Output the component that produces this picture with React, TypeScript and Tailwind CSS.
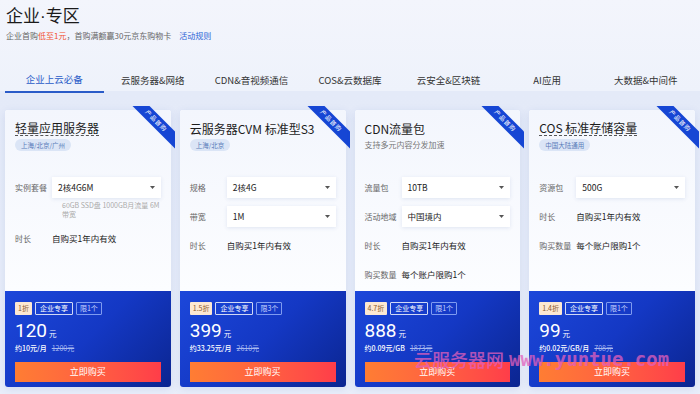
type Row = { label: string; select?: string; text?: string; note?: string };

interface Product {
  title: string;
  dashed?: boolean;
  tag?: string;
  desc?: string;
  rows: Row[];
  discount: string;
  limit: string;
  price: string;
  unit: string;
  origin: string;
}

const tabs = ['企业上云必备', '云服务器&网络', 'CDN&音视频通信', 'COS&云数据库', '云安全&区块链', 'AI应用', '大数据&中间件'];

const products: Product[] = [
  {
    title: '轻量应用服务器',
    dashed: true,
    tag: '上海/北京/广州',
    rows: [
      { label: '实例套餐', select: '2核4G6M', note: '60GB SSD盘 1000GB月流量 6M带宽' },
      { label: '时长', text: '自购买1年内有效' },
    ],
    discount: '1折',
    limit: '限1个',
    price: '120',
    unit: '约10元/月',
    origin: '1200元',
  },
  {
    title: '云服务器CVM 标准型S3',
    tag: '上海/北京',
    rows: [
      { label: '规格', select: '2核4G' },
      { label: '带宽', select: '1M' },
      { label: '时长', text: '自购买1年内有效' },
    ],
    discount: '1.5折',
    limit: '限3个',
    price: '399',
    unit: '约33.25元/月',
    origin: '2610元',
  },
  {
    title: 'CDN流量包',
    desc: '支持多元内容分发加速',
    rows: [
      { label: '流量包', select: '10TB' },
      { label: '活动地域', select: '中国境内' },
      { label: '时长', text: '自购买1年内有效' },
      { label: '购买数量', text: '每个账户限购1个' },
    ],
    discount: '4.7折',
    limit: '限1个',
    price: '888',
    unit: '约0.09元/GB',
    origin: '1873元',
  },
  {
    title: 'COS 标准存储容量',
    dashed: true,
    tag: '中国大陆通用',
    rows: [
      { label: '资源包', select: '500G' },
      { label: '时长', text: '自购买1年内有效' },
      { label: '购买数量', text: '每个账户限购1个' },
    ],
    discount: '1.4折',
    limit: '限1个',
    price: '99',
    unit: '约0.02元/GB/月',
    origin: '708元',
  },
];

function Ribbon() {
  return (
    <div className="absolute -top-[4px] -right-[4px] w-[46px] h-[46px] overflow-hidden">
      <div className="absolute top-[9px] -right-[16px] w-[70px] h-[12px] rotate-45 bg-[#1646d4] flex items-center justify-center text-[6px] leading-none text-white tracking-[1px]">
        产品首购
      </div>
    </div>
  );
}

function Card({ p }: { p: Product }) {
  return (
    <div className="relative flex flex-col h-[277px] rounded-[3px] shadow-[0_2px_8px_rgba(60,90,170,0.12)] bg-white">
      <Ribbon />
      <div className="h-[181px] px-[10px] pt-[10px] rounded-t-[3px] bg-gradient-to-b from-[#f3f6fd] to-[#fcfdff]">
        <div className="h-[16px] flex items-center">
          <span
            className={
              'text-[12px] leading-[15px] text-[#1c1c1c] ' +
              (p.dashed ? 'border-b border-dashed border-[#555]' : '')
            }
          >
            {p.title}
          </span>
        </div>
        <div className="h-[12px] mt-[3px] flex items-center">
          {p.tag && (
            <span className="h-[12px] px-[6px] rounded-full bg-[#dbe5f6] text-[6.5px] leading-[12px] text-[#5a7cba]">
              {p.tag}
            </span>
          )}
          {p.desc && <span className="text-[8px] text-[#777]">{p.desc}</span>}
        </div>
        <div className="mt-[26px] flex flex-col gap-[8px]">
          {p.rows.map((r) => (
            <div key={r.label}>
              <div className="h-[21px] flex items-center">
                <span className="w-[37px] shrink-0 text-[8px] text-[#666] whitespace-nowrap">{r.label}</span>
                {r.select ? (
                  <div className="flex-1 h-[21px] bg-white shadow-[0_1px_4px_rgba(40,70,150,0.12)] flex items-center justify-between pl-[6px] pr-[6px]">
                    <span className="text-[8.5px] text-[#222]">{r.select}</span>
                    <svg width="5" height="3" viewBox="0 0 5 3">
                      <path d="M0 0h5L2.5 3z" fill="#555" />
                    </svg>
                  </div>
                ) : (
                  <span className="text-[8.5px] text-[#222]">{r.text}</span>
                )}
              </div>
              {r.note && (
                <div className="pl-[47px] pt-[3px] pb-[1px] text-[7px] leading-[9px] text-[#aaa]">{r.note}</div>
              )}
            </div>
          ))}
        </div>
      </div>
      <div className="flex-1 px-[10px] pt-[11px] rounded-b-[3px] bg-[linear-gradient(135deg,#1c47da_0%,#1438c4_50%,#0b2590_100%)]">
        <div className="flex gap-[3px]">
          <span className="h-[13px] px-[3px] rounded-[1px] bg-[#fde8d2] text-[#8a5a2e] text-[7px] leading-[13px]">
            {p.discount}
          </span>
          <span className="h-[13px] px-[4px] rounded-[1px] border border-white/80 text-white text-[7px] leading-[11px]">
            企业专享
          </span>
          <span className="h-[13px] px-[3px] rounded-[1px] border border-[#7f9bf0] text-[#c6d3ff] text-[7px] leading-[11px]">
            {p.limit}
          </span>
        </div>
        <div className="mt-[7px] h-[17px] flex items-end text-white">
          <span className="text-[19px] leading-[17px] font-['Roboto',sans-serif]">{p.price}</span>
          <span className="ml-[2px] text-[7.5px] leading-[10px]">元</span>
        </div>
        <div className="mt-[4px] h-[10px] flex items-center gap-[5px] text-[7px]">
          <span className="text-white font-medium">{p.unit}</span>
          <span className="text-[#a7b8f0] line-through">{p.origin}</span>
        </div>
        <button className="mt-[9px] w-full h-[20px] bg-gradient-to-r from-[#ff7d33] to-[#ff3d49] text-white text-[9px]">
          立即购买
        </button>
      </div>
    </div>
  );
}

export default function App() {
  return (
    <div className="relative w-[700px] h-[394px] overflow-hidden bg-[#eef2fb] font-['Noto_Sans_CJK_SC','Noto_Sans',sans-serif]">
      <div className="h-[91px] bg-gradient-to-b from-[#f3f5fc] to-[#eef2fb]">
        <div className="px-[6px] pt-[3px] text-[17px] leading-[24px] text-[#1a1a1a]">
          企业<span className="font-['Liberation_Sans',sans-serif]">·</span>专区
        </div>
        <div className="px-[6px] mt-[1px] text-[8px] leading-[12px] text-[#666]">
          企业首购<span className="text-[#f2502d]">低至1元</span>，首购满额赢30元京东购物卡
          <span className="ml-[8px] text-[#2a63d6]">活动规则</span>
        </div>
        <div className="mt-[25px] px-[5px] grid grid-cols-7">
          {tabs.map((t, i) => (
            <div
              key={t}
              className={
                'h-[26px] flex items-center justify-center text-[9.5px] ' +
                (i === 0 ? 'text-[#2a5bc8] border-b-[2px] border-[#2a5bc8]' : 'text-[#333]')
              }
            >
              {t}
            </div>
          ))}
        </div>
      </div>
      <div className="px-[5px] pt-[19px] grid grid-cols-4 gap-[9px] bg-gradient-to-b from-[#e4eaf8] to-[#e9eefa] h-[303px]">
        {products.map((p) => (
          <Card key={p.title} p={p} />
        ))}
      </div>
      <div className="absolute left-[414px] top-[347px] flex items-end gap-[5px] whitespace-nowrap pointer-events-none opacity-75">
        <span className="text-[18px] leading-[24px] font-medium text-[#e35fbb]">云服务器网</span>
        <span className="text-[19px] leading-[24px] font-bold text-[#e35fbb] font-['DejaVu_Sans_Mono',monospace]">
          www.yuntue.com
        </span>
      </div>
    </div>
  );
}
